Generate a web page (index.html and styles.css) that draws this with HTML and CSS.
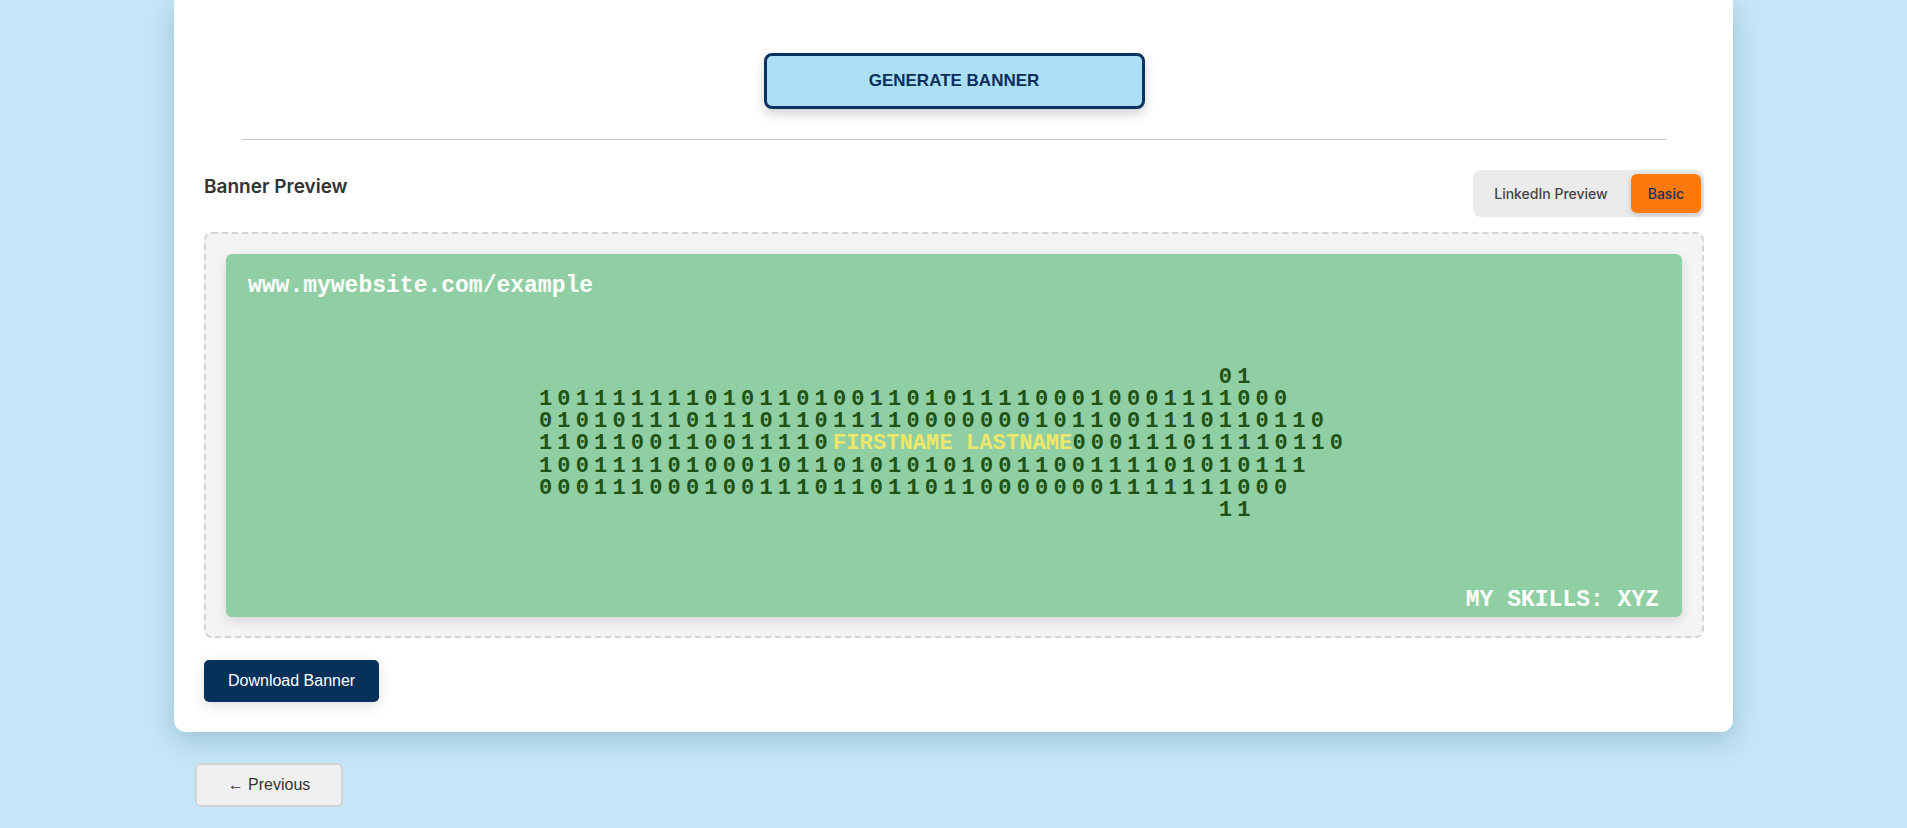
FILE: index.html
```html
<!DOCTYPE html>
<html lang="en">
<head>
<meta charset="utf-8">
<title>Banner Generator</title>
<link rel="stylesheet" href="styles.css">
</head>
<body>
<div class="page">
  <main class="card">
    <div class="gen-row">
      <button class="btn-generate">GENERATE BANNER</button>
    </div>
    <hr class="divider">
    <section class="preview">
      <div class="preview-head">
        <h3 class="preview-title">Banner Preview</h3>
        <div class="toggle">
          <button class="toggle-btn">LinkedIn Preview</button>
          <button class="toggle-btn active">Basic</button>
        </div>
      </div>
      <div class="preview-frame">
        <div class="banner">
          <div class="banner-url">www.mywebsite.com/example</div>
          <div class="banner-art">
            <div class="art">
              <div class="art-row">                                     01</div>
              <div class="art-row">10111111101011010011010111100010001111000</div>
              <div class="art-row">0101011101110110111100000001011001110110110</div>
              <div class="art-row">1101100110011110<span class="art-name">FIRSTNAME LASTNAME</span>000111011110110</div>
              <div class="art-row">100111101000101101010101001100111101010111</div>
              <div class="art-row">00011100010011101101101100000001111111000</div>
              <div class="art-row">                                     11</div>
            </div>
          </div>
          <div class="banner-skills">MY SKILLS: XYZ</div>
        </div>
      </div>
      <button class="btn-download">Download Banner</button>
    </section>
  </main>
  <button class="btn-prev">← Previous</button>
</div>
</body>
</html>
```
FILE: styles.css
```css
* { box-sizing: border-box; }

html, body {
  margin: 0;
  padding: 0;
}

body {
  background: #c5e6f8;
  font-family: "Liberation Sans", Arial, sans-serif;
  height: 828px;
  overflow: hidden;
}

.page {
  width: 1559px;
  margin: 0 auto;
}

.card {
  background: #ffffff;
  border-radius: 0 0 12px 12px;
  padding: 53px 29px 30px 30px;
  box-shadow: 0 8px 26px rgba(20, 60, 90, 0.22);
}

.gen-row {
  display: flex;
  justify-content: center;
}

.btn-generate {
  width: 381px;
  height: 56px;
  border: 3px solid #0b3361;
  border-radius: 8px;
  background: #acdff3;
  color: #0b2f5c;
  font-family: "Liberation Sans", Arial, sans-serif;
  font-weight: 700;
  font-size: 17px;
  box-shadow: 0 5px 12px rgba(0, 0, 0, 0.18);
}

.divider {
  margin: 30px 38px 0;
  height: 0;
  border: 0;
  border-top: 1px solid #c8c8c8;
}

.preview-head {
  margin-top: 30px;
  display: flex;
  justify-content: space-between;
  align-items: flex-start;
}

.preview-title {
  margin: 6px 0 0;
  font-family: "Inter", "Roboto", sans-serif;
  font-weight: 600;
  font-size: 19px;
  line-height: 22px;
  color: #333333;
}

.toggle {
  display: flex;
  gap: 6px;
  padding: 4px 3px 4px 4px;
  background: #ebebeb;
  border-radius: 8px;
}

.toggle-btn {
  height: 39px;
  padding: 0 17px;
  border: 0;
  border-radius: 6px;
  background: transparent;
  font-family: "Inter", "Roboto", sans-serif;
  font-weight: 500;
  font-size: 14px;
  color: #444444;
}

.toggle-btn.active {
  background: #fc7a0b;
  color: #16305a;
  box-shadow: 0 2px 6px rgba(0, 0, 0, 0.18);
}

.preview-frame {
  margin-top: 15px;
  padding: 20px 20px 19px;
  border: 2px dashed #d4d4d4;
  border-radius: 8px;
  background: #f4f4f4;
}

.banner {
  height: 363px;
  display: flex;
  flex-direction: column;
  padding: 21px 23px 5px 22px;
  background: #90cfa3;
  border-radius: 6px;
  box-shadow: 0 4px 12px rgba(0, 0, 0, 0.12);
  font-family: "Liberation Mono", "Courier New", monospace;
  font-weight: 700;
}

.banner-url,
.banner-skills {
  font-size: 23px;
  line-height: 23px;
  color: #ffffff;
}

.banner-skills {
  align-self: flex-end;
}

.banner-art {
  flex: 1;
  display: flex;
  align-items: center;
  padding: 2px 0 0 291px;
}

.art {
  font-size: 22px;
  line-height: 22.2px;
  letter-spacing: 5.17px;
  color: #1f5214;
}

.art-row {
  white-space: pre;
}

.art-name {
  color: #efe76b;
  letter-spacing: 0.1px;
}

.btn-download {
  margin-top: 22px;
  height: 42px;
  padding: 0 24px;
  border: 0;
  border-radius: 5px;
  background: #07305b;
  color: #ffffff;
  font-family: "Liberation Sans", Arial, sans-serif;
  font-size: 16px;
  box-shadow: 0 4px 14px rgba(0, 0, 0, 0.12);
}

.btn-prev {
  margin: 31px 0 0 21px;
  width: 148px;
  height: 44px;
  border: 2px solid #d3d3d3;
  border-radius: 6px;
  background: #f0f0f0;
  color: #333333;
  font-family: "Liberation Sans", Arial, sans-serif;
  font-size: 16px;
}
```
